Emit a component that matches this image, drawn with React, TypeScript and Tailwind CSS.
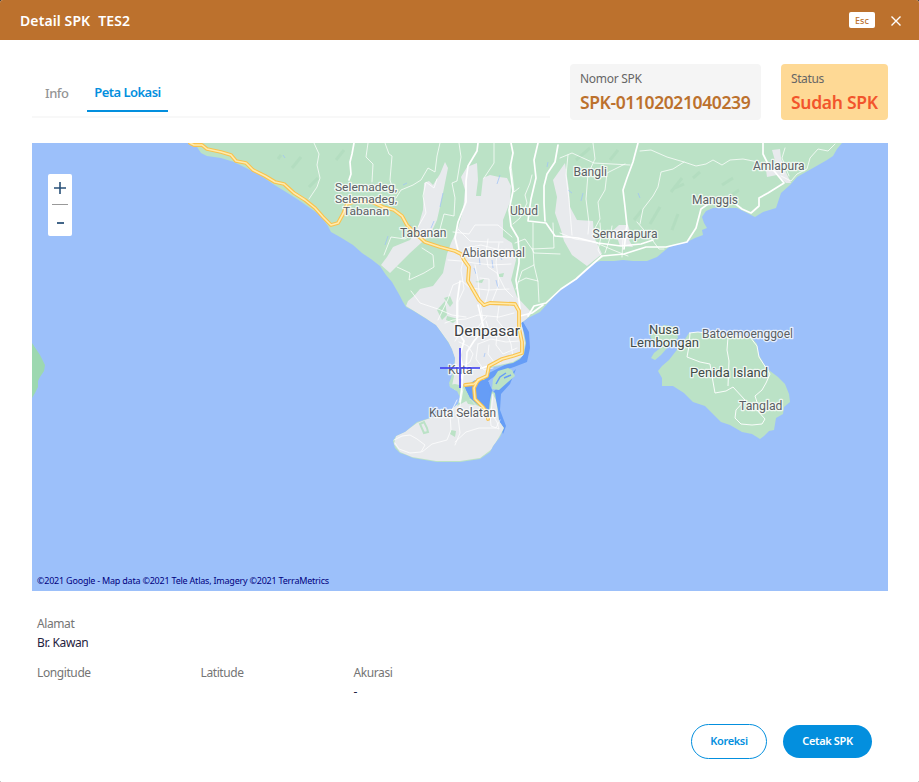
import React from "react";

const WATER = "#9cc0fa";

const mainland =
  "M190 143L197 147 201 153 207 156 221 158 234 162 244 167 260 175 273 184 286 192 300 201 310 208 320 215 328 226 331 232 340 237 353 245 362 253 371 259 380 266 386 275 392 282 396 289 400 296 403 302 406 307 412 310 420 315 428 320 436 325 441 332 448 342 452 349 455 358 454 368 451 378 449 383 450 387 457 391 460 397 458 404 448 412 433 417 417 422 405 432 396 436 393 441 395 448 400 453 406 455 413 458 437 462 460 462 480 459 490 452 493 446 500 437 504 428 499 421 498 410 496 400 495 393 492 391 490 400 489 410 482 408 475 402 470 397 466 390 465 387 470 384 475 380 484 380 487 376 490 368 500 366 508 364 513 363 520 359 524 354 526 343 524 333 521 323 528 318 540 312 548 303 560 290 568 284 577 279 585 271 591 264 600 261 614 261 623 260 633 261 647 261 657 257 663 252 669 247 680 243 687 242 695 238 703 235 702 230 707 228 704 223 702 217 706 211 713 208 737 208 745 212 755 217 763 212 776 208 779 199 781 193 790 185 797 177 813 168 827 160 833 156 837 149 842 143Z";

const urban = [
  "M465 190L461 177 467 167 477 163 478 180 476 196 481 196 483 178 490 175 499 177 507 178 511 186 510 202 503 220 503 237 512 243 516 260 511 280 517 297 532 313 522 324 525 343 523 356 513 362 490 367 486 377 475 380 465 386 455 389 460 398 457 406 470 399 476 405 490 411 492 393 496 400 499 420 504 428 499 437 492 449 480 458 460 461 436 461 412 457 400 452 394 444 396 436 406 431 417 423 433 417 447 412 458 403 456 392 452 386 454 376 455 359 449 343 438 328 427 319 406 306 408 301 414 296 420 289 433 286 443 273 447 254 451 243 458 228 463 211Z",
  "M445 162L448 168 443 193 437 220 430 235 421 243 410 253 400 263 390 273 381 265 387 257 393 247 410 240 418 227 423 210 424 183 429 181 433 185 440 174Z",
  "M565 163L569 190 570 207 577 220 593 221 594 237 602 254 587 266 572 255 564 241 561 230 555 213 557 197 553 180Z",
  "M619 225L628 225 631 234 629 240 633 247 620 246 618 240 607 236Z",
  "M772 150L780 149 781 158 784 168 791 183 786 183 777 175 767 177 766 170 777 168Z",
];

const parks = [
  "M443 386L455 384 464 386 464 391 454 391 448 389Z",
  "M451 430L456 431 455 437 450 434Z",
  "M437 310L445 301 447 315 442 320Z",
  "M444 298L450 296 453 303 450 307Z",
  "M447 316L458 319 453 323 446 320Z",
  "M499 274L504 273 503 277 499 277Z",
  "M475 282L484 279 482 283Z",
];

const whiteRoads = [
  "M314 143L319 154 317 165 320 178 317 187 309 199",
  "M385 143L389 154 392 156 390 180 393 190",
  "M368 143L366 157 373 164 372 182",
  "M440 143L437 156 435 172 428 168 421 180 413 185 401 190 396 198",
  "M459 143L461 157 457 181 452 183 455 198 454 216 444 214 440 229 434 236",
  "M494 143L494 163 484 178",
  "M532 175L530 183 525 195 527 203 520 218 513 224",
  "M453 232L469 234 475 225 498 225 512 237",
  "M437 179L434 188 426 182 423 196 426 213 418 227",
  "M553 223L554 248 532 249 525 239 515 243",
  "M533 223L533 249 534 265 522 271 516 289",
  "M534 265L538 282 539 302M518 282L526 278 538 281",
  "M511 165L514 192 519 188",
  "M532 249L534 253 560 254",
  "M568 155L566 175 569 200 572 235",
  "M560 158L572 153 594 163 612 164 630 165",
  "M593 143L595 159 588 174 586 199 589 223 588 234",
  "M625 164L607 173 605 190 598 202 600 219 594 230",
  "M640 151L651 150 667 157 684 162 696 166 706 164 713 160 722 165 730 160 743 159 758 162",
  "M684 162L673 169 661 172 658 187 653 196 643 209 640 224",
  "M835 144L828 151 818 149 810 158 807 169 797 174 791 181 781 176",
  "M785 148L782 158 789 176",
  "M560 233L575 239 594 242 613 250 628 256",
  "M600 223L601 237 598 250 602 257",
  "M612 226L610 238 605 253",
  "M627 225L623 238 622 257",
  "M637 222L650 237 659 249 664 249",
  "M411 291L420 303 438 309 452 315 466 317",
  "M397 267L410 273 409 280 424 273 434 267 433 255 422 248",
  "M384 255L391 237 405 239 414 233",
  "M438 320L448 299 453 285 462 281 470 288 488 290 509 289",
  "M464 256L461 270 464 289 458 302 458 318",
  "M475 265L478 280 480 303 483 320 480 333",
  "M466 248L481 245 496 249 512 251",
  "M458 229L470 241 489 242 503 242",
  "M448 260L461 261 474 263 491 265 511 264",
  "M488 239L486 253 488 267 497 273 505 289 513 297",
  "M499 243L496 262 499 284 491 304",
  "M480 278L489 279 489 289 485 304",
  "M445 323L453 320 466 319 478 315 499 317 514 313",
  "M455 341L459 335 470 332 478 327 487 316",
  "M459 342L468 346 473 354 470 362 461 368 451 373",
  "M478 344L476 359 484 370 493 368",
  "M489 345L488 354 494 362",
  "M486 321L490 333 506 333 521 335",
  "M497 333L496 345 503 354 517 348",
  "M478 344L491 339 506 342 519 341",
  "M499 306L497 320 506 331 511 344 513 357",
  "M457 400L450 414 451 430 447 440 432 444 422 452",
  "M394 440L402 436 410 435 417 439 425 445 421 452 410 453 399 449 395 443",
  "M463 389L458 417 460 433 455 445",
  "M455 442L466 432 479 428 496 428 500 420",
  "M493 394L491 413 497 422 499 429 491 426 490 414",
];

const majorRoads = [
  "M354 143L352 154 350 162 351 174 349 180",
  "M478 143L477 151 468 166 466 181 466 202 458 222 455 238 458 250",
  "M511 143L513 153 510 168 513 191 509 210 511 226 518 238 519 251 519 263 516 280 519 300 520 309",
  "M538 143L534 160 536 178 531 199 529 213 528 221 546 223 555 236 578 238 598 243 621 246 641 244 653 240",
  "M558 145L555 162 547 174 544 186 544 203 545 221",
  "M638 143L633 162 627 178 623 190 625 207 627 226 624 249",
  "M528 316L534 306 546 303 561 289 576 279 586 270 602 256 624 254 646 247 666 247 687 242 696 228 701 209 711 202",
  "M733 202L742 209 751 213 759 206 759 198 768 193 784 183 775 172 768 164 763 154 763 143",
  "M460 281L457 302 457 318 458 332 464 341 460 355 463 368 462 386 460 402",
  "M478 305L481 317 484 329 474 341 467 352 466 368 461 378",
  "M466 370L482 368 500 362",
  "M520 316L532 313 543 305",
];

const yellowRoads = [
  "M190 143L194 145 202 145 207 149 221 152 231 155 236 161 246 163 253 170 265 176 275 182 284 184 294 193 305 200 315 208 323 217 331 225 338 223 343 214 347 204 357 201 372 202 383 207 394 210 402 216 407 225 414 232 425 242 440 247 455 251 461 254 464 260 469 267 468 281 472 288 479 300 484 305",
  "M484 305L490 303 515 304 519 311 519 328 522 342 522 353 513 356 502 359 489 366 487 376 478 380 474 388 475 399 483 407 487 413 488 419",
  "M465 385L474 384 479 380",
];

type LabelProps = { x: number; y: number; w: number; children: string; size?: number; color?: string };

function Label({ x, y, w, children, size = 12, color = "#5b5f64" }: LabelProps) {
  return (
    <text
      x={x}
      y={y}
      textLength={w}
      lengthAdjust="spacingAndGlyphs"
      fontSize={size}
      fill={color}
      stroke="#ffffff"
      strokeOpacity={0.75}
      strokeWidth={2.6}
      strokeLinejoin="round"
      paintOrder="stroke"
      className="font-['Roboto',sans-serif]"
    >
      {children}
    </text>
  );
}

function BaliMap() {
  return (
    <svg viewBox="32 143 856 448" className="block h-[448px] w-full" preserveAspectRatio="none">
      <defs>
        <clipPath id="land">
          <path d={mainland} />
        </clipPath>
      </defs>
      <rect x="32" y="143" width="856" height="449" fill={WATER} />
      <path d="M32 343L36 349 40 355 42 359 45 365 44 371 40 377 38 381 38 387 35 393 32 398Z" fill="#9cd8b0" />
      <path d="M522 320L529 332 530 348 527 362 514 367 502 371 488 381 493 392 505 380 516 369 510 384 501 394 500 410 506 426 503 434 494 412 482 411 466 397 464 386 487 374 520 357Z" fill="#669df6" />
      <path d={mainland} fill="#bbe2c6" />
      <g clipPath="url(#land)">
        <path
          d="M292 168L301 157M278 159L281 155M336 160L344 150M309 187L318 178M650 224L660 207M671 192L682 178M693 178L700 172M672 230L678 214M722 185L733 178M675 188L684 184M728 198L739 190M634 220L642 210M576 160L590 148M610 160L618 150"
          stroke="#a5d3b5" strokeWidth="3" opacity=".35" fill="none" />
        <path d={urban[0]} fill="#e8eaed" />
        {urban.slice(1).map((d) => <path key={d} d={d} fill="#e8eaed" />)}
        {parks.map((d) => <path key={d} d={d} fill="#bbe2c6" />)}
        <path d="M420 424L424 422 427 428 428 432 424 433Z" fill="none" stroke="#bbe2c6" strokeWidth="2" />
        <path d="M283 155l2 3M403 185l4-2M443 193l-3 14M434 221l-3 7M479 255l1 10M474 268l2 6M492 260l1 8M568 190l4 3M583 193l-2 8M638 193l2 5M500 175l-3 9M548 162l-1 5M388 236l-3 9M411 225l-4 5M485 353l-1 4M496 280l2 8M500 256l2 4" stroke="#9cc0fa" strokeWidth="1" opacity=".7" fill="none" />
      </g>
      <path d="M465 387L472 385 474 393 479 404 487 409 490 398 489 382 480 382 476 391 478 399 485 405 480 406 470 398Z" fill="#669df6" />
      <path d="M478 384L487 381 490 392 488 406 480 398Z" fill="#669df6" />
      <path d="M498 371L508 368 512 370 515 376 508 382 499 390 492 389 493 379Z" fill="#bbe2c6" />
      <path d="M496 384L500 377 506 373M504 378L511 375" stroke="#669df6" strokeWidth="1.5" fill="none" />
      <path d="M464 397L471 400 475 405 468 404Z" fill="#bbe2c6" />
      <g fill="none" stroke="#ffffff" strokeLinejoin="round" strokeLinecap="round">
        {whiteRoads.map((d) => <path key={d} d={d} strokeWidth="1" opacity=".75" />)}
        {majorRoads.map((d) => <path key={d} d={d} strokeWidth="1.7" />)}
      </g>
      <g fill="none" strokeLinejoin="round" strokeLinecap="round">
        {yellowRoads.map((d) => <path key={d} d={d} stroke="#f9c24d" strokeWidth="3.8" />)}
        {yellowRoads.map((d) => <path key={d} d={d} stroke="#ffebad" strokeWidth="1.6" />)}
      </g>
      <path d="M656 329L664 325 676 327 678 338 668 347 661 355 655 360 651 358 654 353 664 345 655 342 650 337Z" fill="#bbe2c6" />
      <path d="M689 333L697 332 720 335 741 337 752 338 757 344 759 355 764 364 770 371 778 377 785 384 789 394 790 402 784 407 783 414 776 418 774 430 769 431 764 436 760 439 752 434 742 432 730 425 721 422 712 413 705 406 693 402 684 393 673 386 662 386 662 378 658 371 662 366 669 360 676 351 683 342Z" fill="#bbe2c6" />
      <g fill="none" stroke="#fff" strokeWidth="1" strokeLinejoin="round" opacity=".9">
        <path d="M690 333L689 346 687 357 700 362 710 364 712 376 715 393 726 391 733 387 745 400M728 337L727 350 729 361 728 386M770 374L766 383 762 390 755 396 759 408M745 400L736 410 735 418 741 424 752 425 762 424 765 419 757 410M689 333L698 332 714 334 750 337 757 346 759 357 770 374" />
      </g>
      <Label x={335} y={190.5} w={62} size={11.5}>Selemadeg,</Label>
      <Label x={335} y={202.5} w={62} size={11.5}>Selemadeg,</Label>
      <Label x={343} y={214.5} w={46} size={11.5}>Tabanan</Label>
      <Label x={400} y={236.5} w={46.5}>Tabanan</Label>
      <Label x={462} y={256.5} w={63}>Abiansemal</Label>
      <Label x={510} y={214.5} w={28}>Ubud</Label>
      <Label x={573.5} y={175.5} w={33.5}>Bangli</Label>
      <Label x={592.5} y={237.5} w={65}>Semarapura</Label>
      <Label x={753} y={169.5} w={51.5}>Amlapura</Label>
      <Label x={692} y={203.5} w={46}>Manggis</Label>
      <Label x={454} y={336} w={66} size={15} color="#3c4043">Denpasar</Label>
      <Label x={448} y={374} w={24.5}>Kuta</Label>
      <Label x={429} y={416.5} w={67}>Kuta Selatan</Label>
      <Label x={649} y={334.3} w={30} size={12} color="#414b48">Nusa</Label>
      <Label x={630} y={347.3} w={69} size={12} color="#414b48">Lembongan</Label>
      <Label x={702} y={338} w={91}>Batoemoenggoel</Label>
      <Label x={690} y={377.3} w={78} size={13} color="#414b48">Penida Island</Label>
      <Label x={739} y={409.5} w={43.5}>Tanglad</Label>
      <path d="M440 368H480M460 348V388" stroke="#4040f0" strokeWidth="2" shapeRendering="crispEdges" className="opacity-80" />
    </svg>
  );
}

export default function App() {
  return (
    <div className="h-[782px] w-[919px] overflow-hidden bg-[#2b2b2b] font-['Noto_Sans','Open_Sans',sans-serif]">
      <div className="flex h-full flex-col rounded-t-[3px] rounded-b-[1px] bg-white">
        <header className="flex h-10 shrink-0 items-center rounded-t-[3px] bg-[#bc712d] pr-[17px] pl-5 text-white">
          <h1 className="flex gap-[8px] pt-0.5 text-[14px] leading-5 font-semibold tracking-[0.1px]">
            <span>Detail SPK</span>
            <span>TES2</span>
          </h1>
          <button className="ml-auto flex h-4 w-[26px] items-center justify-center rounded-[2px] bg-white pt-px text-[9px] leading-4 font-medium text-[#bc712d]">
            Esc
          </button>
          <button aria-label="Tutup" className="ml-[15px] flex size-3 items-center justify-center pt-0.5">
            <svg viewBox="0 0 12 12" className="size-3" fill="none" stroke="currentColor" strokeWidth="1.4">
              <path d="M1.5 1.5L10.5 10.5M10.5 1.5L1.5 10.5" />
            </svg>
          </button>
        </header>

        <main className="flex flex-col px-8 pr-[31px] pt-6">
          <div className="flex items-start">
            <nav className="flex h-[54px] w-[518px] shrink-0 items-start border-b-2 border-[#f8f8f8] pt-[9px] text-[13px]">
              <button className="h-10 w-[55px] pl-[13px] text-left leading-[38px] font-medium tracking-[-0.45px] text-[#949494]">Info</button>
              <button className="h-[39px] w-[81px] border-b-2 border-[#038fde] leading-[38px] font-semibold tracking-[-0.55px] whitespace-nowrap text-[#038fde]">
                Peta Lokasi
              </button>
            </nav>
            <div className="ml-5 h-14 w-[191px] shrink-0 rounded-[4px] bg-[#f5f5f5] px-[10px] pt-[5px]">
              <div className="text-[12px] leading-5 tracking-[-0.3px] text-[#666]">Nomor SPK</div>
              <div className="text-[17.5px] leading-[26px] font-semibold tracking-[-0.4px] whitespace-nowrap text-[#bc712d]">SPK-01102021040239</div>
            </div>
            <div className="ml-5 h-14 w-[107px] shrink-0 rounded-[4px] bg-[#fed995] px-[10px] pt-[5px]">
              <div className="text-[12px] leading-5 tracking-[-0.4px] text-[#666]">Status</div>
              <div className="text-[17.5px] leading-[26px] font-semibold tracking-[-0.3px] whitespace-nowrap text-[#f2552c]">Sudah SPK</div>
            </div>
          </div>

          <section className="relative mt-[23px] h-[449px] w-[856px]">
            <BaliMap />
            <div className="absolute top-[31px] left-4 flex h-[62px] w-6 flex-col items-center rounded-[2px] bg-white text-[#285078]">
              <button aria-label="Perbesar" className="flex h-[30px] w-full items-center justify-center pb-0.5">
                <svg viewBox="0 0 12 12" className="size-3" stroke="currentColor" strokeWidth="1.6"><path d="M6 0V12M0 6H12" /></svg>
              </button>
              <div className="h-px w-4 bg-[#999]" />
              <button aria-label="Perkecil" className="flex h-[31px] w-full items-center justify-center pt-1">
                <svg viewBox="0 0 8 2" className="h-0.5 w-[7px]"><rect width="8" height="2" fill="currentColor" /></svg>
              </button>
            </div>
            <p className="absolute bottom-[4px] left-[5px] text-[9px] leading-[14px] tracking-[-0.22px] whitespace-nowrap text-[#000080]">
              ©2021 Google - Map data ©2021 Tele Atlas, Imagery ©2021 TerraMetrics
            </p>
          </section>

          <section className="mt-[22px] pl-[5px] text-[12px] leading-[19px] tracking-[-0.4px] text-[#1f2340]">
            <div className="text-[#757575]">Alamat</div>
            <div>Br. Kawan</div>
            <div className="mt-[11px] flex">
              <div className="w-[163.5px] text-[#757575]">Longitude</div>
              <div className="w-[153px] text-[#757575]">Latitude</div>
              <div>
                <div className="text-[#757575]">Akurasi</div>
                <div>-</div>
              </div>
            </div>
          </section>

          <footer className="mt-[23px] flex items-center justify-end gap-4 pr-4 text-[11px] font-semibold tracking-[-0.36px]">
            <button className="h-[35px] w-[76px] rounded-full border border-[#038fde] bg-white text-[#038fde]">Koreksi</button>
            <button className="h-[33px] w-[89px] rounded-full bg-[#038fde] text-white">Cetak SPK</button>
          </footer>
        </main>
      </div>
    </div>
  );
}
